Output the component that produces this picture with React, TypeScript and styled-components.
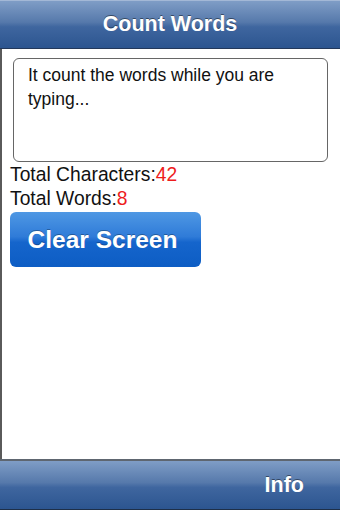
import React from "react";
import styled, { createGlobalStyle } from "styled-components";

const Global = createGlobalStyle`
  html, body { margin: 0; padding: 0; }
  body { width: 340px; height: 510px; overflow: hidden; background: #fff; font-family: "Liberation Sans", Arial, sans-serif; }
`;

const Screen = styled.div`
  width: 340px;
  height: 510px;
  display: flex;
  flex-direction: column;
`;

const NavBar = styled.div`
  height: 47px;
  flex: none;
  display: flex;
  align-items: center;
  justify-content: center;
  background: linear-gradient(#7f9dc6 0%, #5679ab 45%, #3f669f 55%, #2c5590 100%);
  border-top: 1px solid #a3b8d6;
  border-bottom: 1px solid #23385a;
  color: #fff;
  font-weight: bold;
  font-size: 21.5px;
  text-shadow: 0 -1px 0 rgba(0,0,0,0.45);
`;

const Content = styled.div`
  flex: 1;
  display: flex;
  flex-direction: column;
  border-left: 2px solid #5a5a5a;
  padding: 9px 0 0 8px;
`;

const TextBox = styled.div`
  width: 315px;
  height: 104px;
  margin-left: 3px;
  box-sizing: border-box;
  border: 1.5px solid #666;
  border-radius: 6px;
  padding: 4px 10px 0 14px;
  font-size: 17.5px;
  line-height: 24px;
  color: #111;
`;

const Stat = styled.div<{ $top?: number }>`
  font-size: 19.3px;
  line-height: 24px;
  color: #111;
  margin-top: ${(p) => p.$top ?? 0}px;
`;

const Value = styled.span`
  color: #ee1c1c;
`;

const ClearButton = styled.button`
  width: 191px;
  height: 55px;
  margin-top: 1px;
  border: none;
  border-radius: 6px;
  background: linear-gradient(#4f98e4 0%, #2f7bd8 45%, #1565cc 55%, #0d5dc4 100%);
  color: #fff;
  font-family: "Liberation Sans", Arial, sans-serif;
  font-weight: bold;
  font-size: 24.5px;
  text-align: center;
  padding: 0 6px 0 0;
  text-shadow: 0 -1px 0 rgba(0,0,0,0.3);
`;

const Spacer = styled.div`
  flex: 1;
`;

const TabBar = styled.div`
  height: 48px;
  flex: none;
  display: flex;
  align-items: center;
  justify-content: flex-end;
  padding-right: 36px;
  background: linear-gradient(#7f9dc6 0%, #5679ab 45%, #3f669f 55%, #2c5590 100%);
  border-top: 2px solid #5e6670;
  border-bottom: 1px solid #1e2f48;
  color: #fff;
  font-weight: bold;
  font-size: 21.5px;
  text-shadow: 0 -1px 0 rgba(0,0,0,0.45);
`;

export default function App() {
  return (
    <Screen>
      <Global />
      <NavBar>Count Words</NavBar>
      <Content>
        <TextBox>It count the words while you are typing...</TextBox>
        <Stat $top={1}>Total Characters:<Value>42</Value></Stat>
        <Stat>Total Words:<Value>8</Value></Stat>
        <ClearButton>Clear Screen</ClearButton>
        <Spacer />
      </Content>
      <TabBar>Info</TabBar>
    </Screen>
  );
}
